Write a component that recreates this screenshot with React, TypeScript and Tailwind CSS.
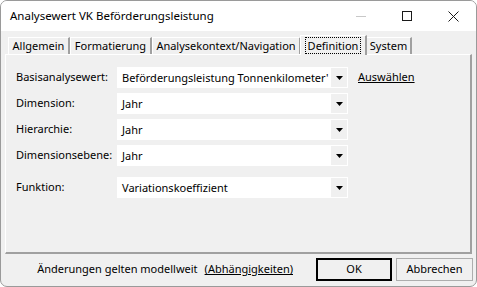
import React from "react";

const font = { fontFamily: '"Noto Sans", Arial, sans-serif' };

function Arrow() {
  return (
    <svg width="7" height="4" viewBox="0 0 7 4">
      <path d="M0 0 H7 L3.5 4 Z" fill="#000" />
    </svg>
  );
}

function Combo({ value }: { value: string }) {
  return (
    <div className="w-[231px] h-[21px] bg-white flex items-center p-[1px]">
      <div className="flex-1 overflow-hidden whitespace-nowrap pl-[4px] leading-[19px]">
        {value}
      </div>
      <div className="w-[16px] h-[19px] bg-[#f0f0f0] flex items-center justify-center">
        <Arrow />
      </div>
    </div>
  );
}

function Row({
  label,
  value,
  extra,
  className = "",
}: {
  label: string;
  value: string;
  extra?: React.ReactNode;
  className?: string;
}) {
  return (
    <div className={`flex items-center h-[21px] ${className}`}>
      <div className="w-[101px] whitespace-nowrap">{label}</div>
      <Combo value={value} />
      {extra}
    </div>
  );
}

function Tab({
  label,
  width,
  selected = false,
}: {
  label: string;
  width: string;
  selected?: boolean;
}) {
  if (selected) {
    return (
      <div
        className={`${width} h-[20px] -mx-[1px] -mb-[1px] relative z-10 bg-[#f0f0f0] border-t border-l border-white border-r-2 border-r-[#a0a0a0] flex items-start justify-center pt-[1px]`}
      >
        <span className="border border-dotted border-black px-[2px] leading-[15px]">
          {label}
        </span>
      </div>
    );
  }
  return (
    <div
      className={`${width} h-[17px] border-t border-l border-white border-r-2 border-r-[#a0a0a0] flex items-center justify-center leading-[16px] whitespace-nowrap`}
    >
      {label}
    </div>
  );
}

export default function App() {
  return (
    <div
      className="w-[477px] h-[287px] bg-[#f0f0f0] border border-[#9a9a9a] rounded-[7px] overflow-hidden flex flex-col text-[11px] text-black"
      style={font}
    >
      {/* Titelleiste */}
      <div className="h-[30px] bg-white flex items-center pl-[9px] shrink-0">
        <div className="flex-1 text-[11.5px]">Analysewert VK Beförderungsleistung</div>
        <div className="w-[46px] h-[30px] flex items-center justify-center">
          <div className="w-[10px] h-px bg-[#c8c8c8]" />
        </div>
        <div className="w-[46px] h-[30px] flex items-center justify-center">
          <div className="w-[10px] h-[10px] border border-[#1a1a1a]" />
        </div>
        <div className="w-[46px] h-[30px] flex items-center justify-center">
          <svg width="11" height="11" viewBox="0 0 11 11">
            <path d="M0.5 0.5 L10.5 10.5 M10.5 0.5 L0.5 10.5" stroke="#1a1a1a" strokeWidth="1" />
          </svg>
        </div>
      </div>

      {/* Reiter */}
      <div className="h-[23px] flex items-end pl-[7px] shrink-0">
        <Tab label="Allgemein" width="w-[62px]" />
        <Tab label="Formatierung" width="w-[82px]" />
        <Tab label="Analysekontext/Navigation" width="w-[149px]" />
        <Tab label="Definition" width="w-[67px]" selected />
        <Tab label="System" width="w-[46px]" />
      </div>

      {/* Panel */}
      <div className="mx-[4px] h-[200px] border-t border-l border-white border-r-2 border-b-2 border-r-[#a0a0a0] border-b-[#a0a0a0] flex flex-col pt-[12px] pl-[10px] gap-[5px] shrink-0">
        <Row
          label="Basisanalysewert:"
          value="Beförderungsleistung Tonnenkilometer'"
          extra={<span className="ml-[10px] underline">Auswählen</span>}
        />
        <Row label="Dimension:" value="Jahr" />
        <Row label="Hierarchie:" value="Jahr" />
        <Row label="Dimensionsebene:" value="Jahr" />
        <Row label="Funktion:" value="Variationskoeffizient" className="mt-[6px]" />
      </div>

      {/* Fußzeile */}
      <div className="flex-1 flex items-center justify-end pr-[3px] pb-[1px]">
        <span>Änderungen gelten modellweit</span>
        <span className="ml-[7px] underline">(Abhängigkeiten)</span>
        <div className="ml-[23px] w-[76px] h-[23px] border-2 border-black bg-[#f0f0f0] flex items-center justify-center">
          OK
        </div>
        <div className="ml-[4px] w-[77px] h-[23px] border border-[#adadad] bg-[#f0f0f0] flex items-center justify-center">
          Abbrechen
        </div>
      </div>
    </div>
  );
}
